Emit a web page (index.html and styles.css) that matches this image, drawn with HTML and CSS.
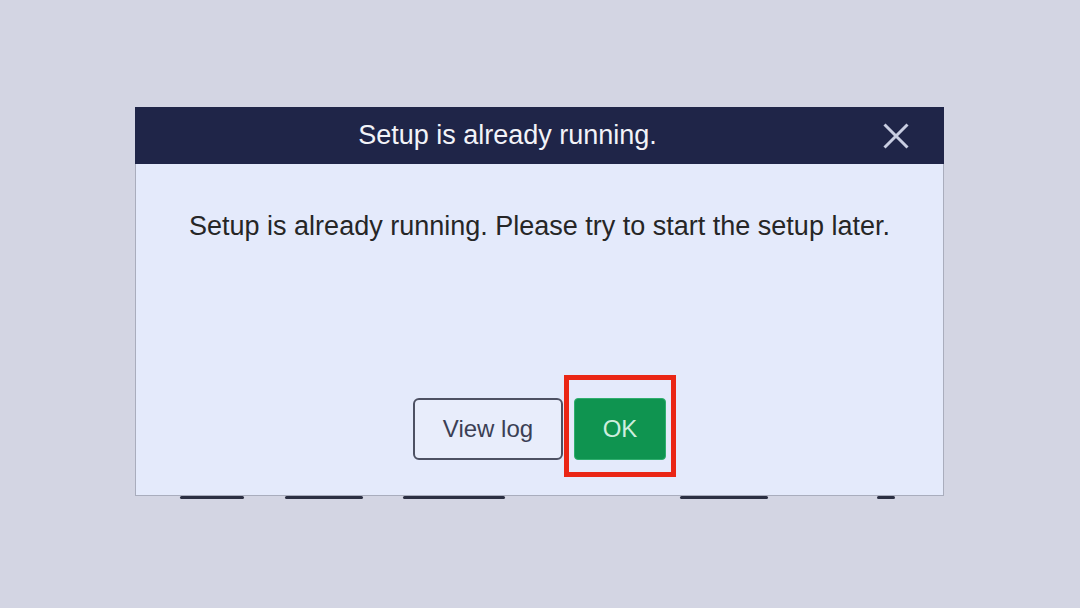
FILE: index.html
```html
<!DOCTYPE html>
<html>
<head>
  <title>Setup is already running.</title>
  <link rel="stylesheet" href="styles.css">
</head>
<body>
  <div id="screen">
    <div id="dialog">
      <div class="titlebar">
        <div class="title">Setup is already running.</div>
        <button class="close" aria-label="Close">
          <svg width="26" height="26" viewBox="0 0 26 26">
            <path d="M1.5 1.5 L24.5 24.5 M24.5 1.5 L1.5 24.5" stroke="#c9cee2" stroke-width="3" fill="none"/>
          </svg>
        </button>
      </div>
      <div class="content">
        <p class="message">Setup is already running. Please try to start the setup later.</p>
        <div class="buttons">
          <button class="btn btn-log">View log</button>
          <div class="highlight">
            <button class="btn btn-ok">OK</button>
          </div>
        </div>
      </div>
    </div>
    <div class="behind">
      <span class="seg s1"></span>
      <span class="seg s2"></span>
      <span class="seg s3"></span>
      <span class="seg s4"></span>
      <span class="seg s5"></span>
    </div>
  </div>
</body>
</html>
```

FILE: styles.css
```css
body {
  margin: 0;
  background: #d3d5e3;
  font-family: "Liberation Sans", Arial, sans-serif;
}

#screen {
  height: 608px;
  padding: 107px 0 0 135px;
  box-sizing: border-box;
  display: flex;
  flex-direction: column;
  align-items: flex-start;
}

#dialog {
  width: 809px;
  height: 389px;
  box-sizing: border-box;
  border: 1px solid #a9adbd;
  border-top: none;
  background: #e4eafb;
  display: flex;
  flex-direction: column;
}

.titlebar {
  height: 57px;
  background: #1f2548;
  display: flex;
  align-items: center;
  margin: 0 -1px;
}

.title {
  flex: 1;
  text-align: center;
  color: #f2f3f8;
  font-size: 27px;
}

.close {
  width: 64px;
  height: 57px;
  background: none;
  border: none;
  padding: 0 32px 0 0;
  display: flex;
  align-items: center;
  justify-content: center;
  cursor: pointer;
}

.content {
  flex: 1;
  display: flex;
  flex-direction: column;
  align-items: center;
  padding: 0 0 35px;
}

.message {
  margin: 47px 0 0;
  font-size: 27px;
  color: #262626;
}

.buttons {
  margin-top: auto;
  display: flex;
  align-items: center;
  gap: 11px;
}

.btn {
  font-family: "Liberation Sans", Arial, sans-serif;
  font-size: 24px;
  height: 62px;
  box-sizing: border-box;
  cursor: pointer;
}

.btn-log {
  width: 150px;
  background: #e8edfb;
  color: #3b3f55;
  border: 2px solid #4d5163;
  border-radius: 6px;
}

.btn-ok {
  display: block;
  width: 92px;
  background: #0f9450;
  color: #cdeede;
  border: 1px solid #2fae6e;
  border-radius: 4px;
}

.highlight {
  position: relative;
}

.highlight::after {
  content: '';
  position: absolute;
  left: -10px;
  right: -10px;
  top: -23px;
  bottom: -17px;
  border: 5px solid #ea2615;
  pointer-events: none;
}

.behind {
  width: 808px;
  display: flex;
}

.seg {
  display: block;
  height: 3px;
  background: #2b2f42;
  border-radius: 2px;
}

.s1 { width: 64px; margin-left: 45px; }
.s2 { width: 78px; margin-left: 41px; }
.s3 { width: 102px; margin-left: 40px; }
.s4 { width: 88px; margin-left: 175px; }
.s5 { width: 18px; margin-left: 109px; }
```
